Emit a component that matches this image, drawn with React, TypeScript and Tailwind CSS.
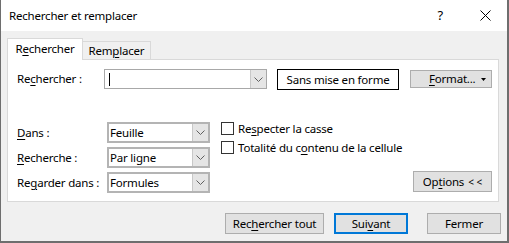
import React from "react";

const U = ({ children }: { children: React.ReactNode }) => (
  <span className="underline decoration-1 underline-offset-[2px]">{children}</span>
);

const Chevron = () => (
  <svg width="9" height="5" viewBox="0 0 9 5" className="block">
    <path d="M0.5 0.5 L4.5 4.5 L8.5 0.5" fill="none" stroke="#606060" strokeWidth="1" />
  </svg>
);

const Select = ({ value }: { value: string }) => (
  <div className="flex h-[21px] w-[103px] border-2 border-[#b4b4b4] bg-white">
    <div className="flex flex-1 items-center pl-[1px]">{value}</div>
    <div className="flex w-[16px] items-center justify-center border-l border-[#c8c8c8] bg-[#e5e5e5]">
      <Chevron />
    </div>
  </div>
);

const Checkbox = ({ children }: { children: React.ReactNode }) => (
  <div className="flex h-[13px] items-center whitespace-nowrap">
    <div className="h-[13px] w-[13px] shrink-0 border border-[#333333] bg-white" />
    <div className="ml-[4px]">{children}</div>
  </div>
);

const Btn = ({ children, className = "" }: { children: React.ReactNode; className?: string }) => (
  <div className={`flex h-[21px] items-center justify-center whitespace-nowrap bg-[#e1e1e1] ${className}`}>
    {children}
  </div>
);

export default function App() {
  return (
    <div className="flex h-[243px] w-[509px] flex-col border-b-2 border-l border-r-2 border-[#6e6e6e] font-['Noto_Sans',sans-serif] text-[11.5px] leading-none tracking-[-0.2px] text-black">
      {/* Title bar */}
      <div className="flex h-[31px] items-center bg-white pl-[8px]">
        <div>Rechercher et remplacer</div>
        <div className="ml-auto flex items-center pr-[16px]">
          <div className="text-[13px]">?</div>
          <svg width="11" height="11" viewBox="0 0 11 11" className="ml-[37px]">
            <path d="M0.5 0.5 L10.5 10.5 M10.5 0.5 L0.5 10.5" stroke="#000" strokeWidth="1" />
          </svg>
        </div>
      </div>

      {/* Body */}
      <div className="flex flex-1 flex-col bg-[#f0f0f0] pl-[6px] pr-[6px] pt-[7px]">
        {/* Tabs */}
        <div className="relative z-10 mb-[-1px] flex h-[22px] items-end">
          <div className="flex h-[22px] w-[76px] items-center justify-center border border-b-0 border-[#d9d9d9] bg-white pb-[1px]">
            R<U>e</U>chercher
          </div>
          <div className="flex h-[19px] w-[68px] items-center justify-center border border-l-0 border-[#d9d9d9] bg-[#f0f0f0]">
            Rem<U>p</U>lacer
          </div>
        </div>

        {/* Panel */}
        <div className="flex h-[143px] w-[492px] flex-col border border-[#d9d9d9] bg-white">
          {/* Row 1 */}
          <div className="mt-[9px] flex h-[21px] items-start pl-[9px]">
            <div className="flex h-[20px] w-[87px] items-center">
              Re<U>c</U>hercher :
            </div>
            <div className="flex h-[20px] w-[163px] border border-[#a8a8a8] bg-white">
              <div className="flex flex-1 items-center pl-[4px]">
                <div className="h-[13px] w-px bg-black" />
              </div>
              <div className="flex w-[16px] items-center justify-center border-l border-[#c8c8c8] bg-[#e5e5e5]">
                <Chevron />
              </div>
            </div>
            <div className="ml-[10px] flex h-[21px] w-[122px] items-center justify-center border border-black">
              Sans mise en forme
            </div>
            <div className="ml-[11px] mt-[1px] flex h-[18px] w-[82px] items-center border border-[#adadad] bg-[#e1e1e1] pl-[18px] pr-[5px]">
              <span>
                <U>F</U>ormat...
              </span>
              <svg width="5" height="3" viewBox="0 0 5 3" className="ml-auto">
                <path d="M0 0 L5 0 L2.5 3 Z" fill="#000" />
              </svg>
            </div>
          </div>

          {/* Section 2 */}
          <div className="mt-[32px] flex">
            <div className="flex flex-col gap-[4px] pl-[9px]">
              <div className="flex h-[21px] items-center">
                <div className="w-[90px]">
                  <U>D</U>ans :
                </div>
                <Select value="Feuille" />
              </div>
              <div className="flex h-[21px] items-center">
                <div className="w-[90px]">
                  <U>R</U>echerche :
                </div>
                <Select value="Par ligne" />
              </div>
              <div className="flex h-[21px] items-center">
                <div className="w-[90px]">
                  Re<U>g</U>arder dans :
                </div>
                <Select value="Formules" />
              </div>
            </div>
            <div className="ml-[11px] flex flex-col gap-[6px]">
              <Checkbox>
                Re<U>s</U>pecter la casse
              </Checkbox>
              <Checkbox>
                Totalité du c<U>o</U>ntenu de la cellule
              </Checkbox>
            </div>
            <Btn className="mb-[1px] ml-auto mr-[6px] w-[79px] self-end border border-[#adadad]">
              Op<U>t</U>ions
              <span className="ml-[4px] text-[10px] tracking-[0px]">&lt; &lt;</span>
            </Btn>
          </div>
        </div>

        {/* Bottom buttons */}
        <div className="mt-[11px] flex justify-end">
          <Btn className="w-[99px] border border-[#adadad]">
            Rec<U>h</U>ercher tout
          </Btn>
          <Btn className="ml-[10px] w-[74px] border-2 border-[#0078d7]">
            Sui<U>v</U>ant
          </Btn>
          <Btn className="ml-[19px] w-[74px] border border-[#adadad]">Fermer</Btn>
        </div>
      </div>
    </div>
  );
}
